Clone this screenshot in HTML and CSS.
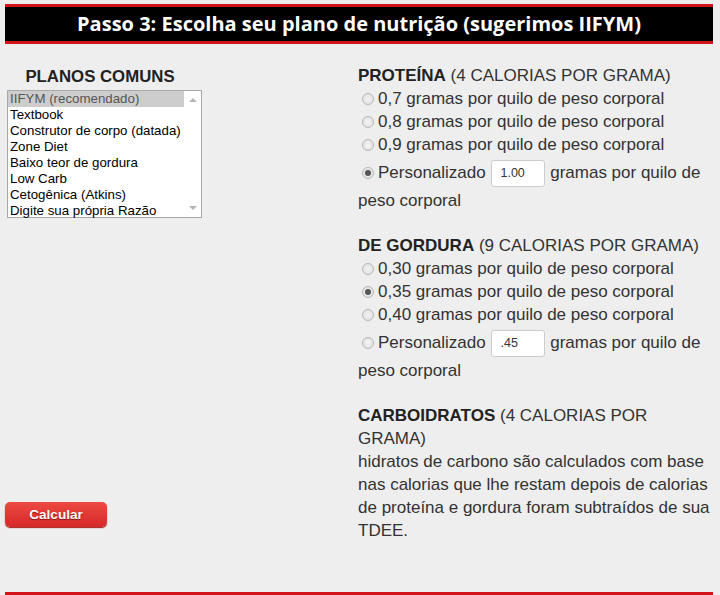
FILE: index.html
```html
<!DOCTYPE html>
<html>
<head>
	<meta charset='utf-8'>
	<title>Passo 3</title>
	<link rel="stylesheet" href="styles.css">
</head>
<body>
	<div id="header">Passo 3: Escolha seu plano de nutrição (sugerimos IIFYM)</div>
	<div id="main">
		<div class="left">
			<div class="planos">PLANOS COMUNS</div>
			<div class="listbox">
				<div class="opts">
					<div class="opt sel">IIFYM (recomendado)</div>
					<div class="opt">Textbook</div>
					<div class="opt">Construtor de corpo (datada)</div>
					<div class="opt">Zone Diet</div>
					<div class="opt">Baixo teor de gordura</div>
					<div class="opt">Low Carb</div>
					<div class="opt">Cetogênica (Atkins)</div>
					<div class="opt">Digite sua própria Razão</div>
				</div>
				<div class="scroll">
					<span class="up"></span>
					<span class="down"></span>
				</div>
			</div>
			<div class="btnwrap"><span class="btn">Calcular</span></div>
		</div>
		<div class="right">
			<div class="sec">
				<div class="ttl"><b>PROTEÍNA</b> (4 CALORIAS POR GRAMA)</div>
				<div class="row"><span class="radio"></span>0,7 gramas por quilo de peso corporal</div>
				<div class="row"><span class="radio"></span>0,8 gramas por quilo de peso corporal</div>
				<div class="row"><span class="radio"></span>0,9 gramas por quilo de peso corporal</div>
				<div class="row custom"><span class="radio on"></span>Personalizado <span class="num">1.00</span> gramas por quilo de peso corporal</div>
			</div>
			<div class="sec">
				<div class="ttl"><b>DE GORDURA</b> (9 CALORIAS POR GRAMA)</div>
				<div class="row"><span class="radio"></span>0,30 gramas por quilo de peso corporal</div>
				<div class="row"><span class="radio on"></span>0,35 gramas por quilo de peso corporal</div>
				<div class="row"><span class="radio"></span>0,40 gramas por quilo de peso corporal</div>
				<div class="row custom"><span class="radio"></span>Personalizado <span class="num">.45</span> gramas por quilo de peso corporal</div>
			</div>
			<div class="sec">
				<div class="ttl"><b>CARBOIDRATOS</b> (4 CALORIAS POR GRAMA)</div>
				<div>hidratos de carbono são calculados com base nas calorias que lhe restam depois de calorias de proteína e gordura foram subtraídos de sua TDEE.</div>
			</div>
		</div>
	</div>
	<div id="footer"></div>
</body>
</html>
```

FILE: styles.css
```css
html {background:#eeeeee;}
body {margin:0; padding:4px 7px 0 5px; font-family:"Liberation Sans", Arial, sans-serif; color:#333;}
div#header{
	background:#000;
	border-top:3px solid #d0141a;
	border-bottom:3px solid #d0141a;
	color:#fff;
	font-family:"Open Sans", sans-serif;
	font-weight:bold;
	font-size:20px;
	text-align:center;
	height:34px;
	line-height:34px;
}
div#main{
	display:flex;
	height:548px;
}
div.left{
	width:351px;
	padding-left:2px;
	display:flex;
	flex-direction:column;
}
div.planos{
	width:186px;
	text-align:center;
	font-weight:bold;
	font-size:16.8px;
	color:#222;
	margin-top:23px;
	height:23px;
	line-height:19px;
}
div.listbox{
	width:193px;
	height:126px;
	border:1px solid #a9a9a9;
	background:#fff;
	display:flex;
	font-size:13.3px;
	color:#000;
}
div.opts{flex:1;}
div.opt{height:16px; line-height:16px; padding-left:2px;}
div.opt.sel{background:#cdcdcd; color:#555;}
div.scroll{
	width:17px;
	display:flex;
	flex-direction:column;
	justify-content:space-between;
	align-items:center;
	padding:7px 0;
}
span.up, span.down{
	width:0; height:0;
	border-left:4px solid transparent;
	border-right:4px solid transparent;
}
span.up{border-bottom:4px solid #b5b5b5;}
span.down{border-top:4px solid #b5b5b5;}
div.btnwrap{margin-top:284px;}
span.btn{
	display:block;
	width:102px;
	height:25px;
	margin-left:-2px;
	border-radius:5px;
	background:linear-gradient(#ec4a40, #d7282a);
	box-shadow:0 1px 1px #a41b1b;
	color:#fff;
	font-weight:bold;
	font-size:13.6px;
	text-align:center;
	line-height:25px;
	text-shadow:0 1px 1px #8a1010;
}
div.right{
	flex:1;
	font-size:17px;
	line-height:23px;
	padding-top:20px;
}
div.sec{margin-bottom:22px;}
div.ttl b{color:#222;}
span.radio{
	display:inline-block;
	width:12px; height:12px;
	border:1px solid #b8b8b8;
	border-radius:50%;
	background:radial-gradient(#f4f4f4, #dcdcdc);
	vertical-align:-1px;
	margin:0 4px 0 4px;
	box-sizing:border-box;
	position:relative;
}
span.radio.on::after{
	content:"";
	position:absolute;
	left:2px; top:2px;
	width:6px; height:6px;
	border-radius:50%;
	background:#555;
}
div.row.custom{padding-top:2px;}
span.num{
	display:inline-block;
	width:44px;
	height:25px;
	line-height:25px;
	border:1px solid #ccc;
	border-radius:3px;
	background:#fff;
	font-size:12.5px;
	padding-left:8px;
	margin:2px 0 2px 1px;
	vertical-align:middle;
	color:#333;
}
div#footer{
	border-top:3px solid #d0141a;
	background:#000;
	height:10px;
}
```
